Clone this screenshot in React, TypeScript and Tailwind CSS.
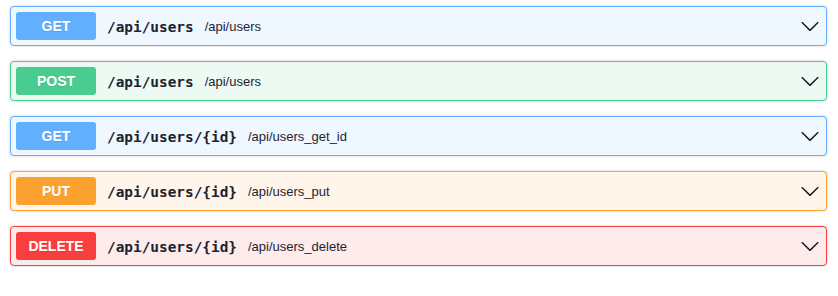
import React from "react";

type Op = {
  method: "GET" | "POST" | "PUT" | "DELETE";
  path: string;
  summary: string;
};

const ops: Op[] = [
  { method: "GET", path: "/api/users", summary: "/api/users" },
  { method: "POST", path: "/api/users", summary: "/api/users" },
  { method: "GET", path: "/api/users/{id}", summary: "/api/users_get_id" },
  { method: "PUT", path: "/api/users/{id}", summary: "/api/users_put" },
  { method: "DELETE", path: "/api/users/{id}", summary: "/api/users_delete" },
];

const styles = {
  GET: { block: "border-[#61affe] bg-[#eff7ff]", badge: "bg-[#61affe]" },
  POST: { block: "border-[#49cc90] bg-[#edfaf4]", badge: "bg-[#49cc90]" },
  PUT: { block: "border-[#fca130] bg-[#fff5ea]", badge: "bg-[#fca130]" },
  DELETE: { block: "border-[#f93e3e] bg-[#feebeb]", badge: "bg-[#f93e3e]" },
};

function Chevron() {
  return (
    <svg width="20" height="20" viewBox="0 0 20 20" className="shrink-0 mr-[1px]">
      <path
        fill="#1b1b1b"
        d="M17.418 6.109c.272-.268.709-.268.979 0s.271.701 0 .969l-7.908 7.83c-.27.268-.707.268-.979 0l-7.908-7.83c-.27-.268-.27-.701 0-.969.271-.268.709-.268.979 0L10 13.25l7.418-7.141z"
      />
    </svg>
  );
}

function OpBlock({ op }: { op: Op }) {
  const s = styles[op.method];
  return (
    <div
      className={`mb-[15px] rounded-[4px] border shadow-[0_0_3px_rgba(0,0,0,0.19)] ${s.block}`}
    >
      <div className="flex items-center p-[5px]">
        <span
          className={`min-w-[80px] rounded-[3px] py-[6px] text-center text-[14px] leading-4 font-bold text-white [text-shadow:0_1px_0_rgba(0,0,0,0.1)] ${s.badge}`}
          style={{ fontFamily: '"Liberation Sans", Arial, sans-serif' }}
        >
          {op.method}
        </span>
        <span
          className="pl-[11px] pr-[11px] pt-[3px] text-[14.4px] font-bold text-[#1c2230]"
          style={{ fontFamily: '"DejaVu Sans Mono", monospace' }}
        >
          {op.path}
        </span>
        <span
          className="pt-[2px] text-[13px] text-[#1f2330]"
          style={{ fontFamily: '"Liberation Sans", Arial, sans-serif' }}
        >
          {op.summary}
        </span>
        <div className="flex-1" />
        <Chevron />
      </div>
    </div>
  );
}

export default function App() {
  return (
    <div className="w-[838px] h-[296px] bg-white pl-[10px] pr-[11px] pt-[6px]">
      {ops.map((op, i) => (
        <OpBlock key={i} op={op} />
      ))}
    </div>
  );
}
